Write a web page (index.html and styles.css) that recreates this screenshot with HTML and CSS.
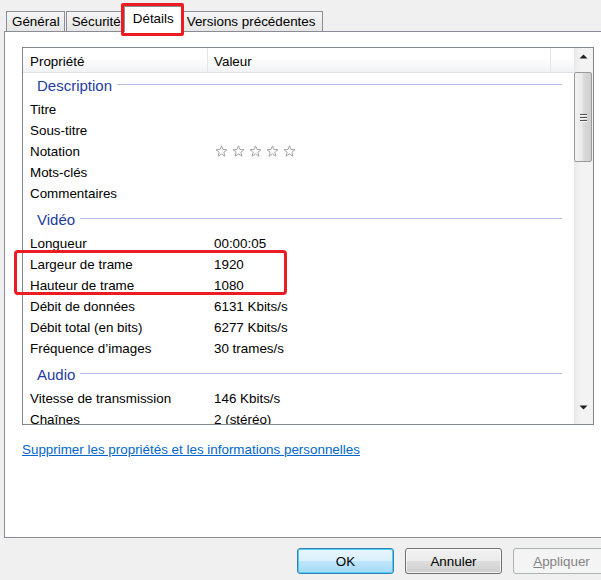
FILE: index.html
```html
<!DOCTYPE html>
<html lang="fr">
<head>
<meta charset="utf-8">
<title>Propriétés - Détails</title>
<link rel="stylesheet" href="styles.css">
</head>
<body>
<div class="window">
  <div class="tabs">
    <div class="tab">Général</div>
    <div class="tab">Sécurité</div>
    <div class="tab active">Détails</div>
    <div class="tab last">Versions précédentes</div>
  </div>
  <div class="panel">
    <div class="listbox">
      <div class="list">
        <div class="header">
          <div class="hcol hcol1">Propriété</div>
          <div class="hcol hcol2">Valeur</div>
          <div class="hcol hcol3"></div>
        </div>
        <div class="rows">
          <div class="section first"><span>Description</span></div>
          <div class="row"><div class="k">Titre</div><div class="v"></div></div>
          <div class="row"><div class="k">Sous-titre</div><div class="v"></div></div>
          <div class="row"><div class="k">Notation</div><div class="v stars">
            <svg class="star" width="13" height="13" viewBox="0 0 13 13"><polygon points="6.5,0.8 7.97,4.48 12,4.71 8.88,7.27 9.91,11.2 6.5,9 3.09,11.2 4.12,7.27 1,4.71 5.03,4.48"/></svg>
            <svg class="star" width="13" height="13" viewBox="0 0 13 13"><polygon points="6.5,0.8 7.97,4.48 12,4.71 8.88,7.27 9.91,11.2 6.5,9 3.09,11.2 4.12,7.27 1,4.71 5.03,4.48"/></svg>
            <svg class="star" width="13" height="13" viewBox="0 0 13 13"><polygon points="6.5,0.8 7.97,4.48 12,4.71 8.88,7.27 9.91,11.2 6.5,9 3.09,11.2 4.12,7.27 1,4.71 5.03,4.48"/></svg>
            <svg class="star" width="13" height="13" viewBox="0 0 13 13"><polygon points="6.5,0.8 7.97,4.48 12,4.71 8.88,7.27 9.91,11.2 6.5,9 3.09,11.2 4.12,7.27 1,4.71 5.03,4.48"/></svg>
            <svg class="star" width="13" height="13" viewBox="0 0 13 13"><polygon points="6.5,0.8 7.97,4.48 12,4.71 8.88,7.27 9.91,11.2 6.5,9 3.09,11.2 4.12,7.27 1,4.71 5.03,4.48"/></svg>
          </div></div>
          <div class="row"><div class="k">Mots-clés</div><div class="v"></div></div>
          <div class="row"><div class="k">Commentaires</div><div class="v"></div></div>
          <div class="section"><span>Vidéo</span></div>
          <div class="row"><div class="k">Longueur</div><div class="v">00:00:05</div></div>
          <div class="row"><div class="k">Largeur de trame</div><div class="v">1920</div></div>
          <div class="row"><div class="k">Hauteur de trame</div><div class="v">1080</div></div>
          <div class="row"><div class="k">Débit de données</div><div class="v">6131 Kbits/s</div></div>
          <div class="row"><div class="k">Débit total (en bits)</div><div class="v">6277 Kbits/s</div></div>
          <div class="row"><div class="k">Fréquence d’images</div><div class="v">30 trames/s</div></div>
          <div class="section"><span>Audio</span></div>
          <div class="row"><div class="k">Vitesse de transmission</div><div class="v">146 Kbits/s</div></div>
          <div class="row"><div class="k">Chaînes</div><div class="v">2 (stéréo)</div></div>
        </div>
      </div>
      <div class="scrollbar">
        <div class="arrow up"><svg width="9" height="5" viewBox="0 0 9 5"><polygon points="0.5,4.5 4.5,0.5 8.5,4.5" /></svg></div>
        <div class="track">
          <div class="thumb">
            <div class="grip"><i></i><i></i><i></i></div>
          </div>
        </div>
        <div class="arrow down"><svg width="9" height="5" viewBox="0 0 9 5"><polygon points="0.5,0.5 8.5,0.5 4.5,4.5" /></svg></div>
      </div>
    </div>
    <a class="link" href="#">Supprimer les propriétés et les informations personnelles</a>
  </div>
  <div class="buttons">
    <button class="btn default">OK</button>
    <button class="btn">Annuler</button>
    <button class="btn disabled"><u>A</u>ppliquer</button>
  </div>
  <div class="mark mark-rows"></div>
</div>
</body>
</html>
```

FILE: styles.css
```css
* { box-sizing: border-box; }

html, body {
  margin: 0;
  padding: 0;
  background: #f0f0f0;
  overflow: hidden;
}

body {
  width: 601px;
  height: 580px;
  font-family: "Liberation Sans", Arial, sans-serif;
  font-size: 13.4px;
  color: #000;
}

.window {
  position: relative;
  width: 610px;
  height: 580px;
}

/* Tabs */
.tabs {
  display: flex;
  align-items: flex-end;
  height: 31px;
  padding-left: 6px;
  position: relative;
  z-index: 2;
}

.tab {
  height: 20px;
  line-height: 19px;
  padding: 0 4px 0 5px;
  border: 1px solid #8c8e94;
  border-bottom: none;
  margin-right: 1px;
  background: linear-gradient(#f4f4f4, #e6e6e6);
  white-space: nowrap;
  color: #000;
}

.tab.last {
  padding-right: 7px;
}

.tab.active {
  position: relative;
  height: 26px;
  line-height: 24px;
  margin: 0 -1px -1px -3px;
  padding: 0 7px 0 8px;
  background: #fff;
  z-index: 3;
}

.tab.active::after {
  content: "";
  position: absolute;
  left: -4px;
  top: -4px;
  right: -3px;
  bottom: -4px;
  border: 3px solid #ec1c24;
  border-radius: 2px;
}

/* Panel */
.panel {
  margin-left: 4px;
  height: 507px;
  border: 1px solid #898c95;
  border-right: none;
  background: #fff;
  padding: 15px 0 0 17px;
}

.listbox {
  display: flex;
  width: 572px;
  height: 378px;
  border: 1px solid #828790;
  background: #fff;
}

.list {
  flex: 1;
  overflow: hidden;
}

.header {
  display: flex;
  height: 25px;
  background: linear-gradient(#ffffff, #ffffff 40%, #f1f2f4);
  border-bottom: 1px solid #dcdfe4;
}

.hcol {
  line-height: 24px;
  padding-top: 2px;
  white-space: nowrap;
}

.hcol1 {
  width: 185px;
  padding-left: 7px;
  border-right: 1px solid #e3e5e9;
}

.hcol2 {
  width: 343px;
  padding-left: 6px;
  border-right: 1px solid #e3e5e9;
}

.hcol3 {
  flex: 1;
}

.section {
  display: flex;
  align-items: center;
  height: 29px;
  padding: 4px 12px 0 14px;
  color: #1e3c9e;
  font-size: 15px;
}

.section.first {
  height: 25px;
  padding-top: 0;
}

.section::after {
  content: "";
  flex: 1;
  height: 1px;
  margin-left: 5px;
  background: #b3bedf;
  transform: translateY(-1px);
}

.row {
  display: flex;
  align-items: center;
  height: 21px;
  padding-top: 2px;
  white-space: nowrap;
}

.k {
  width: 191px;
  padding-left: 7px;
}

.v {
  flex: 1;
}

.stars {
  display: flex;
  align-items: center;
  gap: 4px;
  padding-left: 1px;
}

.star polygon {
  fill: #fbfbfb;
  stroke: #a3a6ab;
  stroke-width: 1;
  stroke-linejoin: round;
}

/* Scrollbar */
.scrollbar {
  width: 19px;
  display: flex;
  flex-direction: column;
  background: linear-gradient(90deg, #e9e9e9, #f3f3f3 40%, #f3f3f3);
}

.arrow {
  height: 17px;
  display: flex;
  align-items: center;
  justify-content: center;
}

.arrow svg polygon {
  fill: #202020;
}

.track {
  flex: 1;
  padding-top: 7px;
}

.thumb {
  width: 18px;
  height: 90px;
  border: 1px solid #9a9a9a;
  border-radius: 2px;
  background: linear-gradient(90deg, #f2f2f2, #e9e9e9 45%, #d9d9d9 55%, #cfcfcf);
  display: flex;
  align-items: center;
  justify-content: center;
}

.grip {
  display: flex;
  flex-direction: column;
  gap: 2px;
}

.grip i {
  display: block;
  width: 7px;
  height: 1px;
  background: #505050;
  box-shadow: 0 1px 0 #f8f8f8;
}

.arrow.down {
  height: 25px;
  padding-bottom: 8px;
}

/* Link */
.link {
  display: inline-block;
  margin-top: 17px;
  color: #0066cc;
  text-decoration: underline;
  white-space: nowrap;
}

/* Buttons */
.buttons {
  display: flex;
  justify-content: flex-end;
  gap: 11px;
  padding-top: 10px;
}

.btn {
  width: 97px;
  height: 26px;
  font-family: "Liberation Sans", Arial, sans-serif;
  font-size: 13.4px;
  color: #000;
  border: 1px solid #707070;
  border-radius: 3px;
  background: linear-gradient(#f2f2f2, #ebebeb 50%, #dddddd 50%, #cfcfcf);
  box-shadow: inset 0 0 0 1px rgba(255,255,255,0.7);
  padding: 0;
}

.btn.default {
  border-color: #3c7fb1;
  background: linear-gradient(#eaf6fd, #d9f0fc 50%, #bee6fd 50%, #a7d9f5);
  box-shadow: inset 0 0 0 1px #48d0f8;
}

.btn.disabled {
  color: #838383;
  border-color: #adb2b5;
  background: #f4f4f4;
  box-shadow: none;
}

/* Red annotation over the rows */
.mark {
  position: absolute;
  border: 3px solid #ec1c24;
  border-radius: 4px;
}

.mark-rows {
  left: 14px;
  top: 250px;
  width: 273px;
  height: 45px;
}
```
